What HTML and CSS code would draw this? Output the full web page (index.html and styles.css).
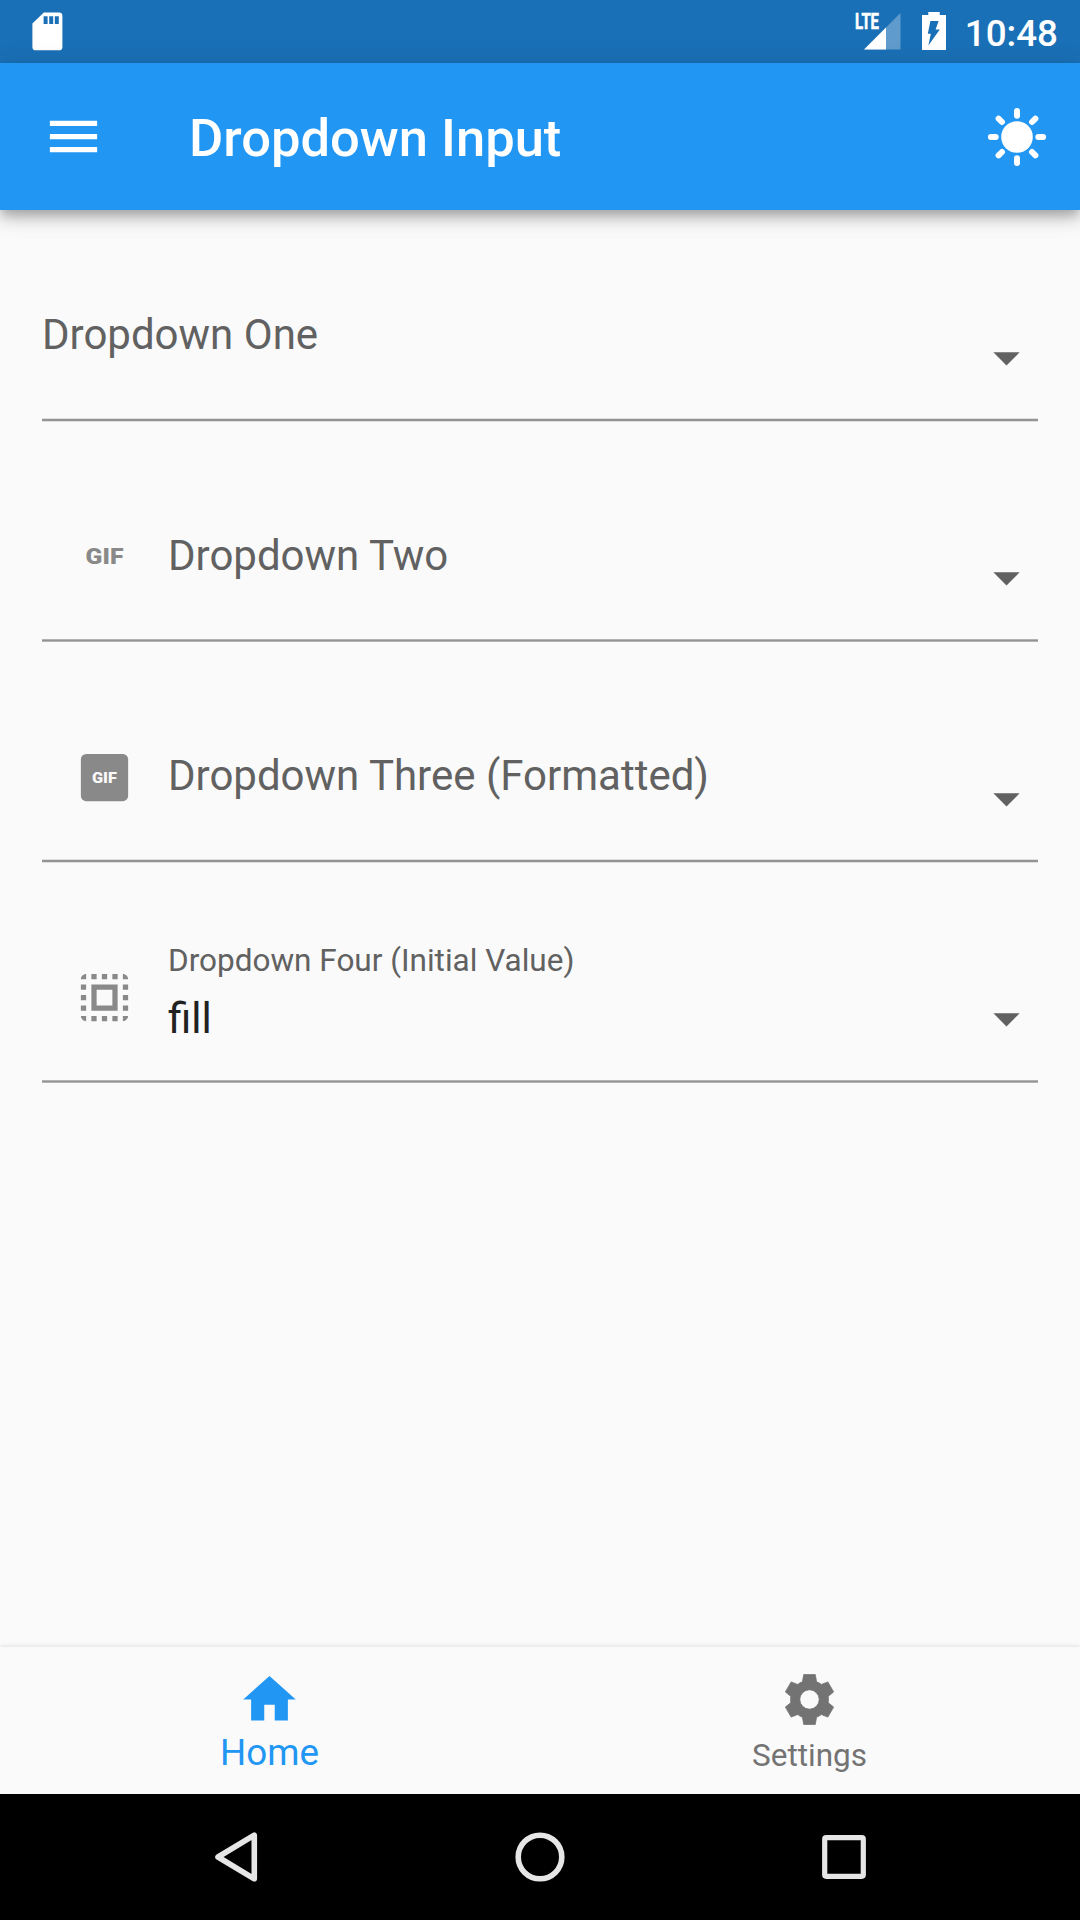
FILE: index.html
```html
<!DOCTYPE html>
<html lang="en">
<head>
<meta charset="utf-8">
<title>Dropdown Input</title>
<link rel="stylesheet" href="styles.css">
</head>
<body>
<div class="screen">
  <div class="status-bar">
    <svg class="status-sd" viewBox="0 0 31 39"><path fill="#fff" fill-rule="evenodd" d="M11.8.5H27a3.4 3.4 0 0 1 3.4 3.4v31a3.4 3.4 0 0 1-3.4 3.4H3.8a3.4 3.4 0 0 1-3.4-3.4V11.6zM11.6 4.3v7.6h4V4.3zM17.2 4.3v7.6h4V4.3zM22.8 4.3v7.6h4V4.3z"/></svg>
    <svg class="status-signal" viewBox="0 0 46 38">
      <path fill="#fff" fill-opacity=".3" d="M45.5 1v36.5H9z"/>
      <path fill="#fff" d="M31 15.5v22H9z"/>
      <text class="lte" x="0" y="17.2" textLength="24" lengthAdjust="spacingAndGlyphs">LTE</text>
    </svg>
    <svg class="status-battery" viewBox="0 0 24 38"><path fill="#fff" fill-rule="evenodd" d="M6.3 0h11.4v3H24v35H0V3h6.3zM8.4 9h8.2l-3 8.4h4.2L6.4 33.5l2.4-11.8H5.8z"/></svg>
    <span class="clock">10:48</span>
  </div>
  <header class="app-bar">
    <svg class="icon" viewBox="0 0 24 24"><path d="M3 18h18v-2H3v2zm0-5h18v-2H3v2zm0-7v2h18V6H3z"/></svg>
    <h1 class="title">Dropdown Input</h1>
    <svg class="sun" viewBox="-32 -32 64 64">
      <circle r="15.8"/>
      <path d="M0-21.3V-26.1M0 21.3V26.1M-21.3 0H-26.1M21.3 0H26.1M-15-15L-18.4-18.4M15-15L18.4-18.4M-15 15L-18.4 18.4M15 15L18.4 18.4"/>
    </svg>
  </header>
  <main class="form">
    <div class="field field--soft">
      <span class="label">Dropdown One</span>
      <svg class="icon arrow" viewBox="0 0 24 24"><path d="M7 10l5 5 5-5z"/></svg>
    </div>
    <div class="field">
      <svg class="icon lead" viewBox="0 0 24 24"><text class="gif" x="4.8" y="15" font-size="8.3" textLength="14.4" lengthAdjust="spacingAndGlyphs">GIF</text></svg>
      <span class="label label--low">Dropdown Two</span>
      <svg class="icon arrow" viewBox="0 0 24 24"><path d="M7 10l5 5 5-5z"/></svg>
    </div>
    <div class="field field--soft">
      <svg class="icon lead" viewBox="0 0 24 24"><rect x="3" y="3" width="18" height="18" rx="2"/><text class="gif gif--light" x="7.2" y="14" font-size="5.6" textLength="9.5" lengthAdjust="spacingAndGlyphs">GIF</text></svg>
      <span class="label">Dropdown Three (Formatted)</span>
      <svg class="icon arrow" viewBox="0 0 24 24"><path d="M7 10l5 5 5-5z"/></svg>
    </div>
    <div class="field">
      <svg class="icon lead" viewBox="0 0 24 24"><path d="M3 5h2V3c-1.1 0-2 .9-2 2zm0 8h2v-2H3v2zm4 8h2v-2H7v2zM3 9h2V7H3v2zm10-6h-2v2h2V3zm6 0v2h2c0-1.1-.9-2-2-2zM5 21v-2H3c0 1.1.9 2 2 2zm-2-4h2v-2H3v2zM9 3H7v2h2V3zm2 18h2v-2h-2v2zm8-8h2v-2h-2v2zm0 8c1.1 0 2-.9 2-2h-2v2zm0-12h2V7h-2v2zm0 8h2v-2h-2v2zm-4 4h2v-2h-2v2zm0-16h2V3h-2v2zM7 17h10V7H7v10zm2-8h6v6H9V9z"/></svg>
      <div class="filled">
        <span class="caption">Dropdown Four (Initial Value)</span>
        <span class="value">fill</span>
      </div>
      <svg class="icon arrow" viewBox="0 0 24 24"><path d="M7 10l5 5 5-5z"/></svg>
    </div>
  </main>
  <nav class="tabs">
    <div class="tab tab--active">
      <svg class="icon" viewBox="0 0 24 24"><path d="M10 20v-6h4v6h5v-8h3L12 3 2 12h3v8z"/></svg>
      <span>Home</span>
    </div>
    <div class="tab">
      <svg class="icon gear" viewBox="-12 -12 24 24"><path fill-rule="evenodd" d="M-2.2-9.5H2.2L2.7-6.75Q3.65-6.4 4.5-5.75L7-6.7L9.2-2.9L7.15-1.2Q7.3 0 7.15 1.2L9.2 2.9L7 6.700L4.500 5.750Q3.650 6.400 2.700 6.750L2.200 9.500H-2.200L-2.700 6.750Q-3.650 6.400-4.500 5.750L-7 6.700L-9.200 2.900L-7.150 1.200Q-7.300 0-7.150-1.200L-9.200-2.900L-7-6.700L-4.500-5.750Q-3.650-6.400-2.700-6.750ZM0-3.700A3.700 3.700 0 0 0 0 3.700A3.700 3.700 0 0 0 0-3.700Z"/></svg>
      <span>Settings</span>
    </div>
  </nav>
  <div class="system-nav">
    <svg viewBox="-32 -32 64 64"><path d="M-18 0L18.3-21.8V21.8Z" stroke-width="5.6"/></svg>
    <svg viewBox="-32 -32 64 64"><circle r="21.8" stroke-width="5.6"/></svg>
    <svg viewBox="-32 -32 64 64"><rect x="-19.3" y="-19.3" width="38.6" height="38.6" rx="1.5" stroke-width="5.2"/></svg>
  </div>
</div>
</body>
</html>
```

FILE: styles.css
```css
body {
  margin: 0;
  background: #fafafa;
  font-family: Roboto, "Liberation Sans", sans-serif;
}

svg {
  display: block;
  flex: none;
}

.screen {
  display: flex;
  flex-direction: column;
  width: 1080px;
  height: 1920px;
  overflow: hidden;
}

.icon {
  width: 63px;
  height: 63px;
  fill: currentColor;
}

/* Status bar */
.status-bar {
  display: flex;
  align-items: flex-start;
  flex: none;
  box-sizing: border-box;
  height: 63px;
  padding: 12px 22px 0 32px;
  background: #1a70b6;
  color: #fff;
}

.status-sd {
  width: 31px;
  height: 39px;
  margin-right: auto;
}

.status-signal {
  width: 46px;
  height: 38px;
  margin-right: 21px;
  overflow: visible;
}

.lte {
  font-size: 22px;
  font-weight: 700;
  fill: #fff;
  stroke: #fff;
  stroke-width: .6px;
}

.status-battery {
  width: 24px;
  height: 38px;
  margin-right: 19px;
}

.clock {
  font-size: 36.75px;
  font-weight: 500;
  line-height: 43px;
}

/* App bar */
.app-bar {
  position: relative;
  display: flex;
  align-items: center;
  flex: none;
  box-sizing: border-box;
  height: 147px;
  padding: 0 31px 0 42px;
  background: #2196f3;
  color: #fff;
  box-shadow: 0 5px 10px -2px rgba(0, 0, 0, .2), 0 10px 13px rgba(0, 0, 0, .14), 0 3px 26px rgba(0, 0, 0, .12);
}

.title {
  flex: 1;
  margin: 2px 0 0 84px;
  font-size: 52.5px;
  font-weight: 500;
  line-height: 62px;
}

.sun {
  width: 64px;
  height: 64px;
  fill: #fff;
  stroke: #fff;
  stroke-linecap: round;
}

.sun circle {
  stroke: none;
}

.sun path {
  stroke-width: 6px;
}

/* Form */
.form {
  display: grid;
  grid-template-rows: 212px 220px 221px 220px;
  align-content: start;
  flex: 1;
  padding: 0 42px;
}

.field {
  display: flex;
  align-items: flex-end;
  background: linear-gradient(#b2b2b2 33%, #949494 33% 67%, #b2b2b2 67%) bottom / 100% 3px no-repeat;
  color: #616161;
}

.field--soft {
  background: linear-gradient(#dedede 25%, #949494 25% 75%, #dedede 75%) bottom / 100% 4px no-repeat;
}

.lead {
  margin: 0 32px 54px 31px;
  color: #898989;
}

.gif {
  font-weight: 900;
}

.gif--light {
  fill: #fafafa;
}

.label {
  flex: 1;
  padding-bottom: 62px;
  font-size: 42px;
  line-height: 50px;
}

.label--low {
  padding-bottom: 61px;
}

.filled {
  display: flex;
  flex: 1;
  flex-direction: column;
  padding-bottom: 39px;
}

.caption {
  font-size: 31.5px;
  line-height: 38px;
}

.value {
  margin-top: 14px;
  color: #212121;
  font-size: 42px;
  line-height: 50px;
}

.arrow {
  margin-bottom: 33px;
}

/* Bottom tabs */
.tabs {
  display: grid;
  grid-template-columns: 1fr 1fr;
  flex: none;
  height: 147px;
  background: #fafafa;
  box-shadow: 0 -1px 4px rgba(0, 0, 0, .1);
}

.tab {
  display: flex;
  flex-direction: column;
  align-items: center;
  box-sizing: border-box;
  padding: 21px 1px 0 0;
  color: #737373;
  font-size: 31.5px;
  line-height: 50px;
}

.gear {
  stroke: currentColor;
  stroke-width: .3px;
  stroke-linejoin: round;
}

.tab--active {
  color: #2196f3;
  font-size: 36.75px;
  line-height: 44px;
}

/* System navigation */
.system-nav {
  display: grid;
  grid-template-columns: repeat(3, 304px);
  place-content: center;
  place-items: center;
  flex: none;
  height: 126px;
  background: #000;
}

.system-nav svg {
  width: 64px;
  height: 64px;
  fill: none;
  stroke: #e6e6e6;
  stroke-linejoin: round;
}
```
